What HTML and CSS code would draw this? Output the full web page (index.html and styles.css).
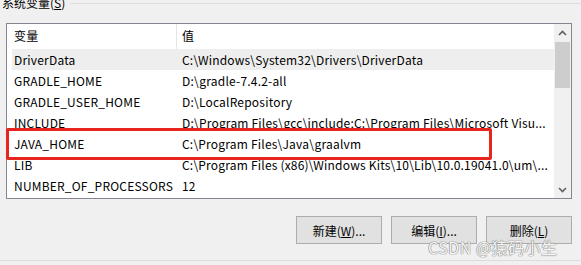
FILE: index.html
```html
<!DOCTYPE html>
<html lang="zh-CN">
<head>
  <meta charset="UTF-8">
  <title>系统变量</title>
  <link rel="stylesheet" href="styles.css">
</head>
<body>
  <div class="group">
    <!-- Group box caption -->
    <div class="group-head">
      <span class="group-title">系统变量(<u>S</u>)</span>
      <span class="group-line"></span>
    </div>

    <!-- Variable list -->
    <div class="list">
      <div class="list-body">
        <div class="row head">
          <span class="c-name">变量</span>
          <span class="c-value">值</span>
        </div>
        <div class="row selected">
          <span class="c-name">DriverData</span>
          <span class="c-value">C:\Windows\System32\Drivers\DriverData</span>
        </div>
        <div class="row">
          <span class="c-name">GRADLE_HOME</span>
          <span class="c-value">D:\gradle-7.4.2-all</span>
        </div>
        <div class="row">
          <span class="c-name">GRADLE_USER_HOME</span>
          <span class="c-value">D:\LocalRepository</span>
        </div>
        <div class="row">
          <span class="c-name">INCLUDE</span>
          <span class="c-value">D:\Program Files\gcc\include;C:\Program Files\Microsoft Visu...</span>
        </div>
        <div class="row">
          <span class="c-name">JAVA_HOME</span>
          <span class="c-value">C:\Program Files\Java\graalvm</span>
        </div>
        <div class="row">
          <span class="c-name">LIB</span>
          <span class="c-value">C:\Program Files (x86)\Windows Kits\10\Lib\10.0.19041.0\um\...</span>
        </div>
        <div class="row">
          <span class="c-name">NUMBER_OF_PROCESSORS</span>
          <span class="c-value">12</span>
        </div>
      </div>

      <div class="scrollbar">
        <span class="arrow">
          <svg width="9" height="6" viewBox="0 0 9 6"><path d="M1 5 L4.5 1.5 L8 5" fill="none" stroke="#606060" stroke-width="1.6"/></svg>
        </span>
        <span class="thumb"></span>
        <span class="track"></span>
        <span class="arrow">
          <svg width="9" height="6" viewBox="0 0 9 6"><path d="M1 1 L4.5 4.5 L8 1" fill="none" stroke="#606060" stroke-width="1.6"/></svg>
        </span>
      </div>

      <!-- highlight around JAVA_HOME -->
      <div class="mark"></div>
    </div>

    <div class="actions">
      <button>新建(<u>W</u>)...</button>
      <button>编辑(<u>I</u>)...</button>
      <button>删除(<u>L</u>)</button>
    </div>
  </div>
  <div class="bottom-line"></div>

  <div class="watermark">CSDN @猿码小生</div>
</body>
</html>
```

FILE: styles.css
```css
body {
  margin: 0;
  background: #f0f0f0;
  font-family: "Noto Sans CJK SC", "Noto Sans", sans-serif;
  font-size: 12px;
  color: #000;
  overflow: hidden;
}
.group {
  padding: 0 9px 0 6px;
}
.group-head {
  display: flex;
  align-items: center;
  height: 18px;
  margin-top: -6px;
  margin-left: -4px;
}
.group-title {
  line-height: 18px;
  padding-right: 5px;
}
.group-line {
  flex: 1;
  height: 1px;
  background: #dcdcdc;
  margin-right: -9px;
}
.list {
  position: relative;
  display: flex;
  margin-top: 11px;
  height: 174px;
  border: 1px solid #828790;
  background: #fff;
}
.list-body {
  flex: 1;
  padding-left: 5px;
  overflow: hidden;
  letter-spacing: 0.2px;
}
.row {
  display: flex;
  height: 21px;
  line-height: 21px;
  white-space: nowrap;
}
.row.head {
  height: 25px;
  line-height: 24px;
}
.row.selected {
  background: #eeeeee;
}
.c-name {
  width: 162px;
  padding-left: 2px;
  flex: none;
}
.c-value {
  flex: 1;
  padding-left: 6px;
  overflow: hidden;
}
.head .c-value {
  border-left: 1px solid #e5e5e5;
  padding-left: 5px;
}
.scrollbar {
  width: 17px;
  display: flex;
  flex-direction: column;
  background: #f0f0f0;
}
.arrow {
  height: 17px;
  display: flex;
  align-items: center;
  justify-content: center;
}
.thumb {
  height: 46px;
  margin: 1px 1px 0;
  background: #cdcdcd;
}
.track {
  flex: 1;
}
.mark {
  position: absolute;
  left: -1px;
  top: 104px;
  width: 480px;
  height: 26px;
  border: 3px solid #e8241e;
  border-radius: 2px;
}
.actions {
  display: flex;
  justify-content: flex-end;
  gap: 9px;
  margin-top: 17px;
}
.actions button {
  width: 86px;
  height: 28px;
  font: inherit;
  background: #e1e1e1;
  border: 1px solid #adadad;
  padding: 0;
}
.bottom-line {
  margin-top: 16px;
  height: 1px;
  background: #dcdcdc;
}
.watermark {
  position: absolute;
  left: 428px;
  top: 239px;
  font-size: 16px;
  line-height: 17px;
  color: #f6f6f6;
  text-shadow: 0 0 1px #808080, 0 0 1px #808080, 0 0 1px #999;
  letter-spacing: 0.5px;
}
```
